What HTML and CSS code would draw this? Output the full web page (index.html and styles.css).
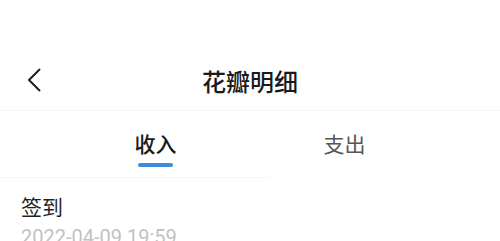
FILE: index.html
```html
<!DOCTYPE html>
<html lang="zh-CN">
  <head>
    <meta charset="UTF-8" />
    <meta name="viewport" content="width=device-width, initial-scale=1.0" />
    <title>花瓣明细</title>
    <link rel="stylesheet" href="styles.css">
  </head>
  <body>
    <div class="status-bar"></div>
    <div class="nav-bar">
      <button class="back-btn" aria-label="返回">
        <svg width="14" height="24" viewBox="0 0 14 24">
          <polyline points="12.5,1.5 2,12 12.5,22.5" fill="none" stroke="#1f1f1f" stroke-width="2" stroke-linecap="round" stroke-linejoin="round" />
        </svg>
      </button>
      <h1 class="nav-title">花瓣明细</h1>
    </div>

    <div class="tabs">
      <div class="tab active">
        <span class="tab-text">收入</span>
        <span class="tab-line"></span>
      </div>
      <div class="tab">
        <span class="tab-text">支出</span>
        <span class="tab-line"></span>
      </div>
    </div>
    <div class="tab-divider"></div>

    <div class="record-list">
      <div class="record">
        <p class="record-title">签到</p>
        <p class="record-time">2022-04-09 19:59</p>
      </div>
    </div>
  </body>
</html>
```

FILE: styles.css
```css
* {
  margin: 0;
  padding: 0;
  box-sizing: border-box;
  font-family: "Noto Sans CJK SC", "Noto Sans", sans-serif;
}
body {
  background-color: #fff;
  overflow: hidden;
}
.status-bar {
  height: 51px;
}
.nav-bar {
  position: relative;
  height: 60px;
  display: flex;
  align-items: center;
  justify-content: center;
  border-bottom: 1px solid #f4f4f4;
}
.back-btn {
  position: absolute;
  left: 27px;
  top: 17px;
  background: none;
  border: none;
  display: flex;
}
.nav-title {
  font-size: 24px;
  font-weight: 500;
  line-height: 30px;
  color: #1a1a1a;
}
.tabs {
  width: 378px;
  margin: 0 auto;
  display: flex;
  height: 66px;
}
.tab {
  flex: 1;
  display: flex;
  flex-direction: column;
  align-items: center;
  padding-top: 21px;
}
.tab-text {
  font-size: 21px;
  line-height: 22px;
  color: #555;
}
.tab.active .tab-text {
  color: #1a1a1a;
  font-weight: 500;
}
.tab-line {
  width: 35px;
  height: 4px;
  margin-top: 9px;
  border-radius: 2px;
}
.tab.active .tab-line {
  background-color: #3d8ae0;
}
.tab-divider {
  width: 269px;
  height: 1px;
  background-color: #f4f4f4;
}
.record {
  padding: 14px 21px 0;
}
.record-title {
  font-size: 21px;
  line-height: 28px;
  color: #1f1f1f;
}
.record-time {
  margin-top: 5px;
  font-family: Roboto, "Noto Sans CJK SC", sans-serif;
  font-size: 20px;
  line-height: 24px;
  color: #c2c2c2;
}
```
